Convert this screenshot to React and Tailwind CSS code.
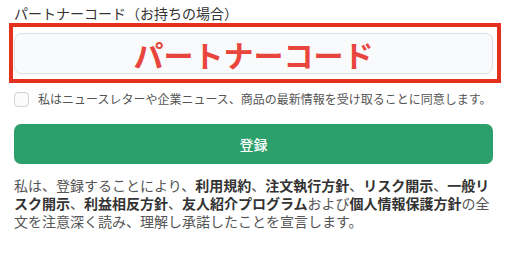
import React, { useState } from 'react';

const jp = { fontFamily: '"Noto Sans CJK JP", "Noto Sans", sans-serif' };

export default function App() {
  const [agree, setAgree] = useState(false);

  return (
    <div className="bg-white w-[514px] h-[256px] overflow-hidden" style={jp}>
      <div className="w-[479px] ml-[14px] pt-[3px]">
        <label className="block text-[14px] leading-[20px] text-[#333]">パートナーコード（お持ちの場合）</label>

        <div className="relative mt-[10px]">
          <div className="h-[41px] rounded-[7px] border border-[#dcdfe4] bg-[#f9fafb] flex items-center justify-center">
            <span className="text-[30px] leading-none font-bold text-[#e8453c] tracking-normal">パートナーコード</span>
          </div>
          {/* 赤枠の注記 */}
          <div className="absolute left-[-5px] top-[-10px] right-[-8px] bottom-[-9px] border-4 border-[#e3311d] pointer-events-none" />
        </div>

        <label className="flex items-center gap-[9px] mt-[17px] cursor-pointer">
          <input
            type="checkbox"
            checked={agree}
            onChange={e => setAgree(e.target.checked)}
            className="appearance-none w-[15px] h-[15px] rounded-[4px] border border-[#cfd3d9] bg-[#fbfbfc] shrink-0"
          />
          <span className="text-[12px] leading-[16px] text-[#555] whitespace-nowrap">
            私はニュースレターや企業ニュース、商品の最新情報を受け取ることに同意します。
          </span>
        </label>

        <button className="w-full h-[40px] mt-[17px] rounded-[7px] bg-[#2ca06c] text-white text-[14px] font-medium">
          登録
        </button>

        <p className="mt-[12px] text-[14px] leading-[18px] text-[#555]">
          私は、登録することにより、<b className="font-bold text-[#333]">利用規約</b>、<b className="font-bold text-[#333]">注文執行方針</b>、<b className="font-bold text-[#333]">リスク開示</b>、<b className="font-bold text-[#333]">一般リスク開示</b>、<b className="font-bold text-[#333]">利益相反方針</b>、<b className="font-bold text-[#333]">友人紹介プログラム</b>および<b className="font-bold text-[#333]">個人情報保護方針</b>の全文を注意深く読み、理解し承諾したことを宣言します。
        </p>
      </div>
    </div>
  );
}
